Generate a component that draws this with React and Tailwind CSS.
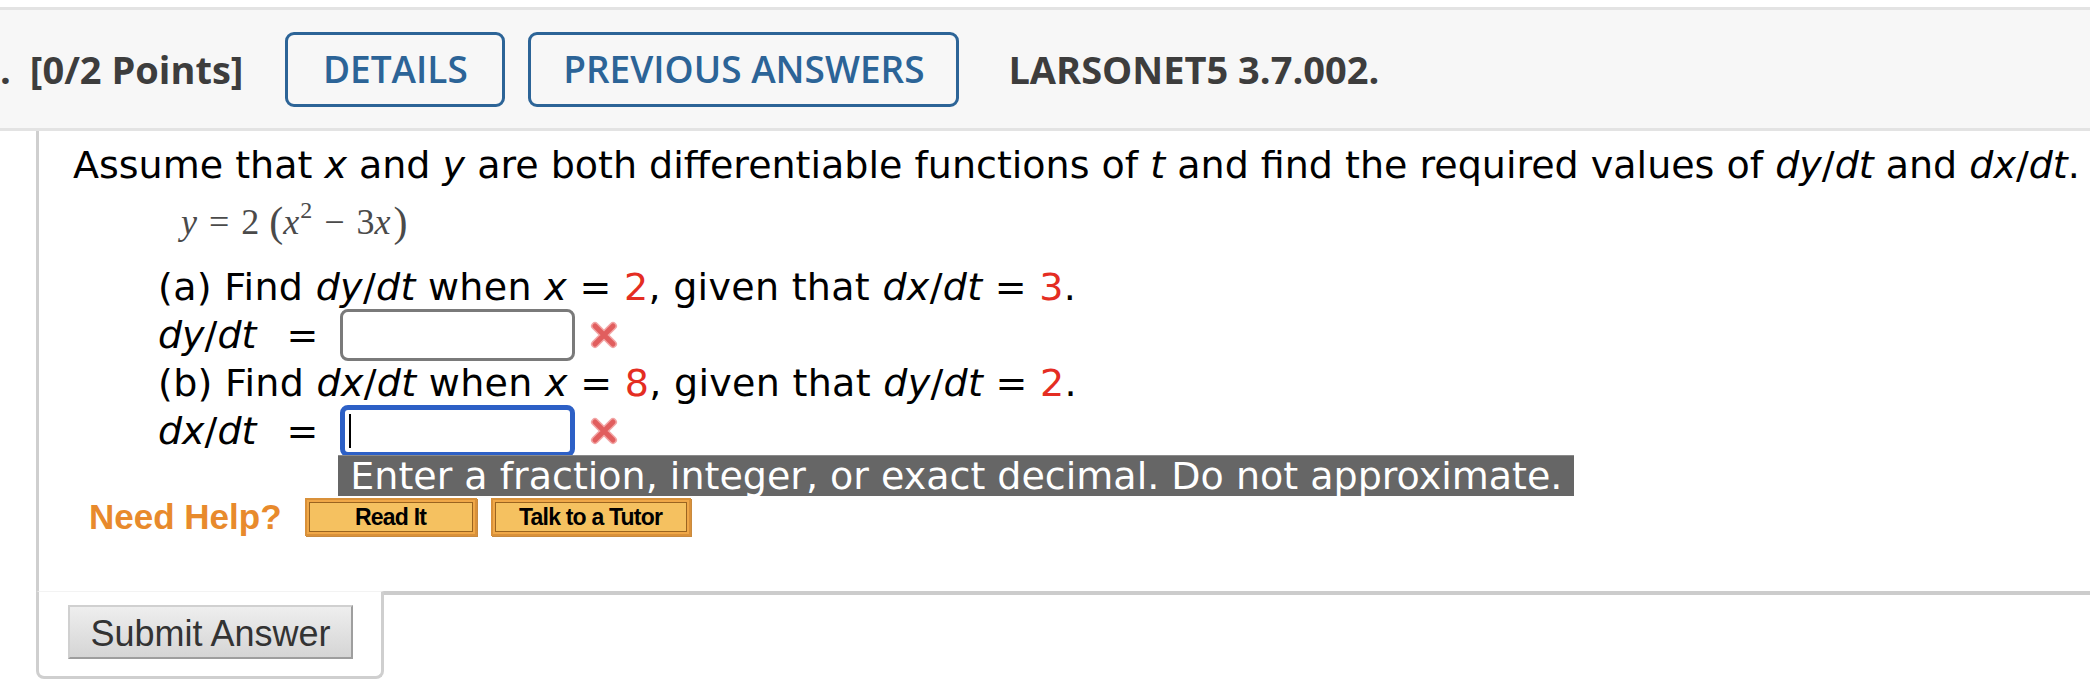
import React from 'react';

const RED = 'text-[#e42d22]';

const WrongMark = () => (
  <svg width="28" height="28" viewBox="0 0 28 28" className="ml-[15px] shrink-0">
    <path d="M5 5 L23 23 M23 5 L5 23" stroke="#f2a5a5" strokeWidth="8" strokeLinecap="round" />
    <path d="M5 5 L23 23 M23 5 L5 23" stroke="#e15e5e" strokeWidth="5" strokeLinecap="round" />
  </svg>
);

const HelpButton = ({ label, width }) => (
  <button
    className={`${width} h-[38px] border-[2px] border-[#d9913a] bg-[#f0a848] p-[2px] shadow-[1px_1px_0_#c98a3e]`}
  >
    <span className="flex h-full w-full items-center justify-center border border-[#9a6420] bg-[#f5c160] font-['Liberation_Sans'] text-[23px] font-bold tracking-[-0.8px] text-black">
      {label}
    </span>
  </button>
);

const Formula = () => (
  <div className="ml-[142px] flex h-[44px] items-center font-['Liberation_Serif'] text-[36px] text-[#4a4a4a]">
    <i>y</i>
    <span className="mx-[12px]">=</span>
    <span>2</span>
    <span className="ml-[10px] text-[42px] font-light">(</span>
    <i>x</i>
    <sup className="ml-[1px] text-[24px]">2</sup>
    <span className="mx-[12px]">−</span>
    <span>3</span>
    <i>x</i>
    <span className="ml-[3px] text-[42px] font-light">)</span>
  </div>
);

const Label = ({ num, den }) => (
  <span className="flex whitespace-nowrap">
    <i>{num}</i>/<i>{den}</i>
    <span className="ml-[30px]">=</span>
  </span>
);

export default function App() {
  return (
    <div className="min-h-screen bg-white pt-[7px] font-['DejaVu_Sans'] text-black">
      {/* question header */}
      <div className="flex h-[124px] items-center overflow-hidden border-y-[3px] border-[#e3e3e3] bg-[#f7f7f7] font-['Open_Sans'] text-[38px] text-[#3d3d3d]">
        <span className="font-bold">.</span>
        <span className="ml-[19px] font-bold">[0/2 Points]</span>
        <button className="ml-[42px] flex h-[75px] w-[220px] shrink-0 items-center justify-center rounded-[9px] border-[3px] border-[#2c6497] text-[37px] font-semibold text-[#2c6497]">
          DETAILS
        </button>
        <button className="ml-[23px] flex h-[75px] w-[431px] shrink-0 items-center justify-center rounded-[9px] border-[3px] border-[#2c6497] text-[37px] font-semibold text-[#2c6497]">
          PREVIOUS ANSWERS
        </button>
        <span className="ml-[49px] font-bold">LARSONET5 3.7.002.</span>
      </div>

      {/* question body */}
      <div className="ml-[36px] border-l-[3px] border-[#cfcfcf] pb-[55px] pt-[12px] text-[38px]">
        <p className="ml-[34px] h-[44px] leading-[44px] whitespace-nowrap">
          Assume that <i>x</i> and <i>y</i> are both differentiable functions of <i>t</i> and find the
          required values of <i>dy</i>/<i>dt</i> and <i>dx</i>/<i>dt</i>.
        </p>
        <div className="mt-[13px]">
          <Formula />
        </div>

        <div className="ml-[119px] mt-[19px]">
          <div className="flex h-[48px] items-center whitespace-nowrap tracking-[0.3px]">
            (a) Find&nbsp;<i>dy</i>/<i>dt</i>&nbsp;when&nbsp;<i>x</i>&nbsp;=&nbsp;<span className={RED}>2</span>, given that&nbsp;
            <i>dx</i>/<i>dt</i>&nbsp;=&nbsp;<span className={RED}>3</span>.
          </div>
          <div className="flex h-[48px] items-center">
            <Label num="dy" den="dt" />
            <div className="ml-[22px] h-[52px] w-[235px] shrink-0 rounded-[8px] border-[3px] border-[#7a7a7a] bg-white" />
            <WrongMark />
          </div>
          <div className="flex h-[48px] items-center whitespace-nowrap tracking-[0.3px]">
            (b) Find&nbsp;<i>dx</i>/<i>dt</i>&nbsp;when&nbsp;<i>x</i>&nbsp;=&nbsp;<span className={RED}>8</span>, given that&nbsp;
            <i>dy</i>/<i>dt</i>&nbsp;=&nbsp;<span className={RED}>2</span>.
          </div>
          <div className="flex h-[48px] items-center">
            <Label num="dx" den="dt" />
            <div className="relative ml-[22px] h-[52px] w-[235px] shrink-0 rounded-[8px] border-[5px] border-[#2d60c6] bg-white">
              <div className="ml-[4px] mt-[4px] h-[34px] w-[2px] bg-black" />
              <div className="absolute left-[-7px] top-full z-10 mt-[3px] flex h-[41px] items-center whitespace-nowrap border-t border-[#8a8a8a] bg-[#666666] px-[12px] text-[38px] text-white">
                Enter a fraction, integer, or exact decimal. Do not approximate.
              </div>
            </div>
            <WrongMark />
          </div>
        </div>

        <div className="ml-[50px] mt-[43px] flex h-[38px] items-center">
          <span className="font-['Liberation_Sans'] text-[35px] font-bold text-[#e88a2c]">Need Help?</span>
          <div className="ml-[23px] flex gap-[14px]">
            <HelpButton label="Read It" width="w-[172px]" />
            <HelpButton label="Talk to a Tutor" width="w-[200px]" />
          </div>
        </div>
      </div>

      {/* submit tab */}
      <div className="flex">
        <div className="ml-[36px] w-[348px] rounded-b-[8px] border-x-[3px] border-b-[3px] border-t border-[#cfcfcf] border-t-[#f3f3f3] pb-[17px] pl-[29px] pt-[13px]">
          <button className="h-[54px] w-[285px] border-[2px] border-t-[#d0d0d0] border-l-[#d0d0d0] border-r-[#9e9e9e] border-b-[#9e9e9e] bg-gradient-to-b from-[#eeeeee] to-[#d5d5d5] font-['Liberation_Sans'] text-[36px] text-[#333333]">
            Submit Answer
          </button>
        </div>
        <div className="flex-1 border-t-[4px] border-[#cccccc]" />
      </div>
    </div>
  );
}
